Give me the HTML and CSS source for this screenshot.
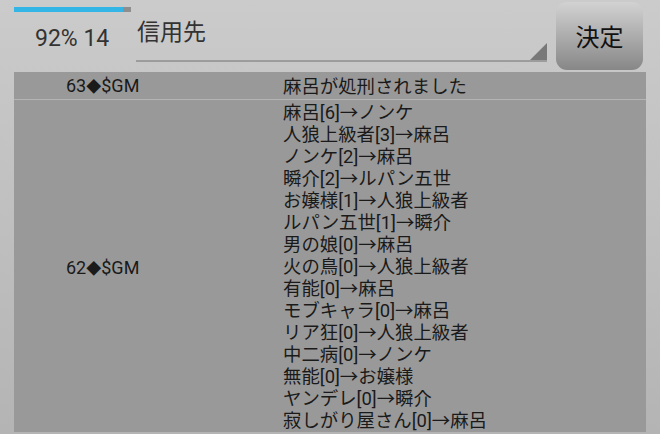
FILE: index.html
```html
<!DOCTYPE html>
<html lang="ja">
<head>
    <meta charset="UTF-8">
    <title>投票結果</title>
    <link rel="stylesheet" href="styles.css">
</head>
<body>
    <div class="header">
        <div class="status">
            <div class="progress"><div class="progress-fill" style="width: 93%"></div></div>
            <div class="status-text">92% 14</div>
        </div>
        <div class="spinner">
            <span class="spinner-text">信用先</span>
        </div>
        <button class="decide">決定</button>
    </div>

    <div class="log">
        <div class="row">
            <div class="day">63<span class="mark">◆</span>$GM</div>
            <div class="msg">麻呂が処刑されました</div>
        </div>
        <div class="row">
            <div class="day">62<span class="mark">◆</span>$GM</div>
            <div class="msg">
                <div>麻呂[6]→ノンケ</div>
                <div>人狼上級者[3]→麻呂</div>
                <div>ノンケ[2]→麻呂</div>
                <div>瞬介[2]→ルパン五世</div>
                <div>お嬢様[1]→人狼上級者</div>
                <div>ルパン五世[1]→瞬介</div>
                <div>男の娘[0]→麻呂</div>
                <div>火の鳥[0]→人狼上級者</div>
                <div>有能[0]→麻呂</div>
                <div>モブキャラ[0]→麻呂</div>
                <div>リア狂[0]→人狼上級者</div>
                <div>中二病[0]→ノンケ</div>
                <div>無能[0]→お嬢様</div>
                <div>ヤンデレ[0]→瞬介</div>
                <div>寂しがり屋さん[0]→麻呂</div>
            </div>
        </div>
    </div>
</body>
</html>
```

FILE: styles.css
```css
html, body {
    margin: 0;
    height: 100%;
}
body {
    font-family: Roboto, "Noto Sans CJK JP", sans-serif;
    background: linear-gradient(#cbcbcb, #b4b4b4);
    color: #1e1e1e;
    padding: 0 14px;
    overflow: hidden;
}
.header {
    display: flex;
    height: 72px;
}
.status {
    width: 122px;
}
.progress {
    margin-top: 7px;
    width: 117px;
    height: 5px;
    background: #8e8e8e;
}
.progress-fill {
    height: 100%;
    background: #33b5e5;
}
.status-text {
    margin-top: 12px;
    padding-left: 21px;
    font-size: 23px;
    line-height: 30px;
    color: #333;
}
.spinner {
    position: relative;
    flex: 1;
    height: 60px;
    border-bottom: 2px solid #9c9c9c;
}
.spinner::after {
    content: "";
    position: absolute;
    right: 0;
    bottom: 0;
    border-style: solid;
    border-width: 0 0 17px 17px;
    border-color: transparent transparent #787878 transparent;
}
.spinner-text {
    display: block;
    padding-left: 1px;
    margin-top: 18px;
    font-size: 23px;
    line-height: 30px;
    color: #333;
}
.decide {
    margin: 2px 3px 0 9px;
    width: 87px;
    height: 68px;
    border: none;
    border-radius: 11px;
    background: linear-gradient(#d2d2d2, #878787);
    font-family: Roboto, "Noto Sans CJK JP", sans-serif;
    font-size: 24px;
    color: #111;
    padding: 0 0 2px;
}
.log {
    background: #999999;
    font-size: 18px;
    line-height: 22px;
    color: #1a1a1a;
}
.row {
    display: flex;
    align-items: center;
}
.row + .row {
    border-top: 1px solid #b4b4b4;
}
.row:first-child {
    padding: 3px 0 1px;
}
.row:last-child {
    padding-top: 2px;
}
.day {
    width: 269px;
    padding-left: 52px;
    box-sizing: border-box;
    padding-top: 3px;
}
.row:first-child .day {
    padding-top: 0;
}
.mark {
    font-size: 15px;
}
.msg {
    flex: 1;
    font-size: 18.4px;
}
```
